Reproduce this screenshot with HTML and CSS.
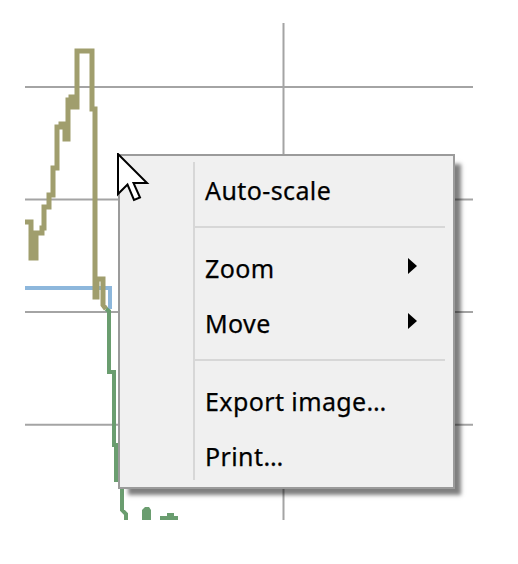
FILE: index.html
```html
<!DOCTYPE html>
<html>
<head>
<meta charset="utf-8">
<link rel="stylesheet" href="styles.css">
</head>
<body>
<div class="stage">
  <svg class="chart" width="518" height="564" viewBox="0 0 518 564">
    <defs>
      <clipPath id="plot"><rect x="25" y="23" width="448" height="497"/></clipPath>
    </defs>
    <g class="grid">
      <line x1="25" y1="87" x2="473" y2="87"/>
      <line x1="25" y1="199.5" x2="473" y2="199.5"/>
      <line x1="25" y1="312" x2="473" y2="312"/>
      <line x1="25" y1="424.7" x2="473" y2="424.7"/>
      <line x1="283.5" y1="23" x2="283.5" y2="520"/>
    </g>
    <g clip-path="url(#plot)" fill="none">
      <path class="s-blue" d="M25,288 H110 V309"/>
      <path class="s-olive" d="M25,222 H31 V258 H36 V233 H42 V228 H44 V207 H49 V195 H53 V168 H57 V127 H61 V124 H65 V139 H68 V100 H71 V97 H73 V107 H77 V51 H92 V109 H95 V297 H97 V279 H103 V305 L106,309"/>
      <path class="s-green" d="M106,309 L109,311 V372 H114 V445 H116 V480 H122 V510 L126,514 V524 M160,518 H169 V515 H172 V518 H178"/>
      <path class="s-green-fill" d="M142,522 V510 L145,507 H149 L151,510 V522 Z"/>
    </g>
  </svg>

  <div class="menu">
    <div class="menu-body">
      <div class="item">Auto-scale</div>
      <div class="sep"></div>
      <div class="item"><span>Zoom</span><i class="arrow"></i></div>
      <div class="item"><span>Move</span><i class="arrow"></i></div>
      <div class="sep"></div>
      <div class="item">Export image…</div>
      <div class="item">Print…</div>
    </div>
  </div>

  <svg class="cursor" width="34" height="52" viewBox="0 0 34 52">
    <polygon points="1,1 1,41 10.5,31.5 17,47 23,44.5 16.5,30 30,30" fill="#fff" stroke="#000" stroke-width="2" stroke-linejoin="miter"/>
  </svg>
</div>
</body>
</html>
```

FILE: styles.css
```css
html, body {
  margin: 0;
  padding: 0;
  background: #ffffff;
}

.stage {
  position: relative;
  width: 518px;
  height: 564px;
  overflow: hidden;
}

.chart {
  display: block;
}

.grid line {
  stroke: #a4a4a4;
  stroke-width: 2;
}

.s-blue {
  stroke: #8db7dc;
  stroke-width: 4;
}

.s-olive {
  stroke: #a09e6d;
  stroke-width: 5;
}

.s-green {
  stroke: #6a9d6f;
  stroke-width: 4;
}

.s-green-fill {
  fill: #6a9d6f;
  stroke: none;
}

.menu {
  position: absolute;
  left: 118px;
  top: 154px;
  width: 337px;
  height: 335px;
  box-sizing: border-box;
  border: 2px solid #9b9b9b;
  background: #f0f0f0;
  box-shadow: 8px 8px 4px -2px rgba(0, 0, 0, 0.5);
  padding: 6px 0 7px 73px;
  display: flex;
  font-family: "Noto Sans", "Open Sans", sans-serif;
  font-size: 25px;
  letter-spacing: 0.4px;
  -webkit-text-stroke: 0.25px #000;
  color: #000;
}

.menu-body {
  flex: 1;
  border-left: 2px solid #d7d7d7;
  padding-top: 1px;
}

.item {
  height: 55px;
  line-height: 55px;
  padding: 0 36px 0 10px;
  display: flex;
  align-items: center;
  justify-content: space-between;
  white-space: nowrap;
}

.sep {
  height: 2px;
  background: #d7d7d7;
  margin: 8px 8px 13px 0;
}

.arrow {
  width: 0;
  height: 0;
  border-left: 9px solid #000;
  border-top: 8px solid transparent;
  border-bottom: 8px solid transparent;
  margin-top: -6px;
}

.cursor {
  position: absolute;
  left: 117px;
  top: 153px;
}
```
